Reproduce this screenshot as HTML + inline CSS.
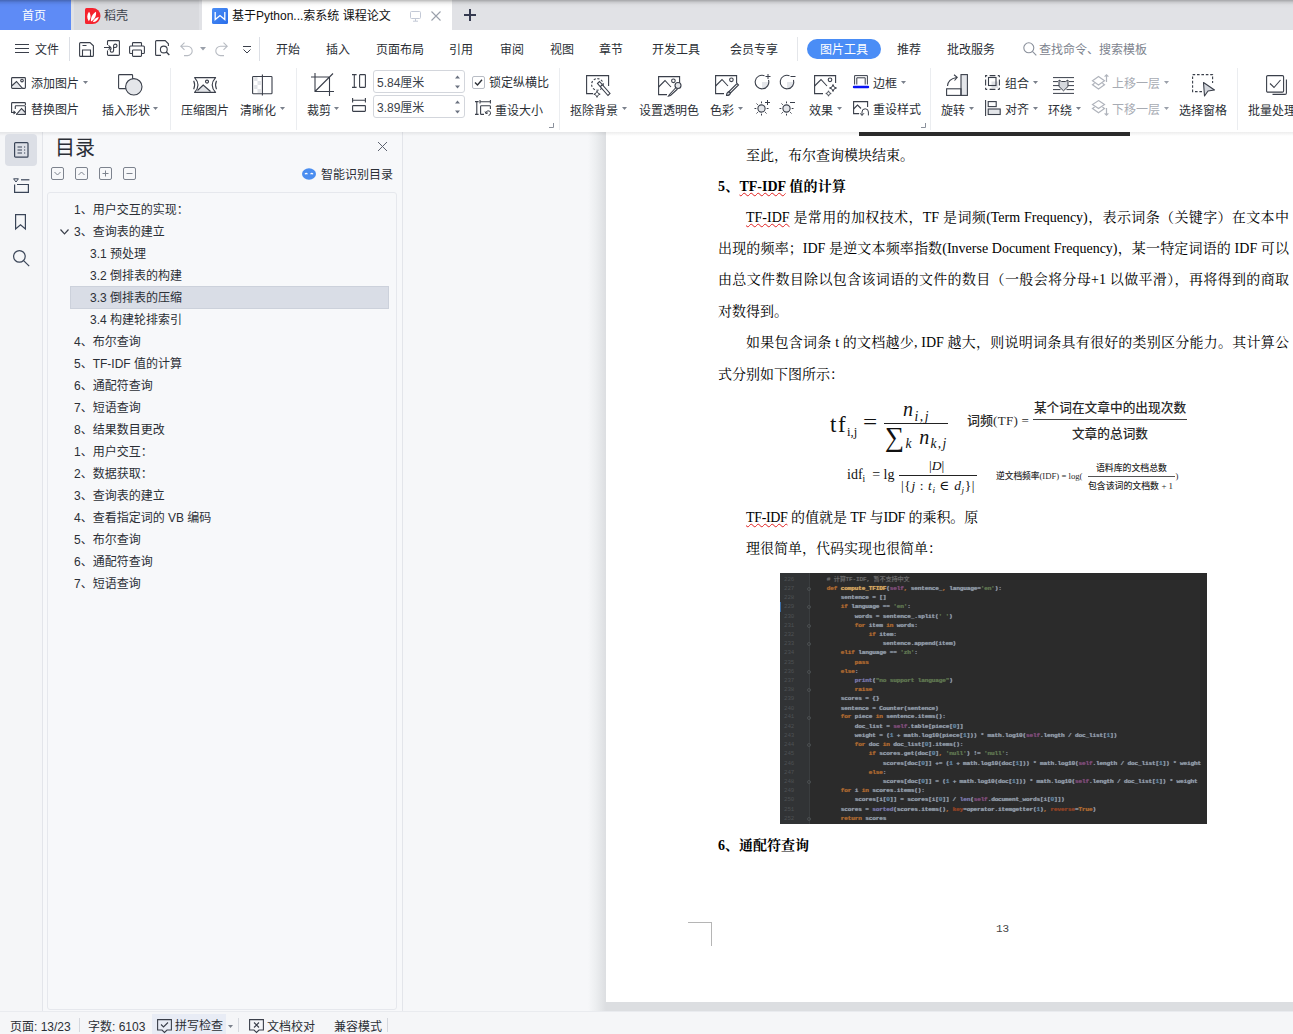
<!DOCTYPE html>
<html lang="zh-CN">
<head>
<meta charset="utf-8">
<title>基于Python的检索系统 课程论文</title>
<style>
*{box-sizing:border-box;margin:0;padding:0}
html,body{width:1293px;height:1034px;overflow:hidden;background:#f5f6f8}
body{position:relative;font-family:"Liberation Sans","Noto Sans CJK SC",sans-serif;font-size:12px;color:#2b2f36}
.abs{position:absolute}
.t{position:absolute;white-space:nowrap;line-height:20px;height:20px}
svg{position:absolute;overflow:visible}
svg *{vector-effect:none}
/* tab bar */
#tabbar{left:0;top:0;width:1293px;height:30px;background:#e1e2e6}
#tabshadow{left:0;top:0;width:1293px;height:8px;background:linear-gradient(rgba(0,0,0,.27),rgba(0,0,0,.1) 30%,rgba(0,0,0,.02) 60%,rgba(0,0,0,0))}
#tab-home{left:0;top:0;width:71px;height:30px;background:#5e8bf6;color:#fff}
#tab-dk{left:74px;top:0;width:125px;height:30px;background:#d9dade}
#tab-doc{left:202px;top:0;width:250px;height:30px;background:#fff}
/* menu */
#menubar{left:0;top:30px;width:1293px;height:35px;background:#fff}
#ribbon{left:0;top:65px;width:1293px;height:67px;background:#fff}
.vsep{position:absolute;width:1px;background:#dcdfe5}
/* left */
#strip{left:0;top:132px;width:42px;height:883px;background:#f5f6f8}
#nav{left:42px;top:132px;width:361px;height:883px;background:#f7f8fa;border-left:1px solid #e3e5ea;border-right:1px solid #e3e5ea}
#navbox{left:47px;top:192px;width:350px;height:818px;background:#f7f8fa;border:1px solid #e6e8ed;border-radius:3px}
#gap{left:403px;top:132px;width:185px;height:883px;background:#f6f7f9}
#status{left:0;top:1011px;width:1293px;height:23px;background:#f5f6f8;border-top:1px solid #e9ebef}
/* page */
#canvas{left:588px;top:132px;width:705px;height:879px;background:linear-gradient(to right,#f6f7f9 0,#eceef0 8px,#dcdee1 18px,#dcdee1 100%)}
#page{left:606px;top:132px;width:700px;height:870px;background:#fff}
.doc{position:absolute;white-space:nowrap;font-family:"Liberation Serif","Noto Serif CJK SC",serif;font-size:14px;line-height:20px;height:20px;color:#000}
.wavy{text-decoration:underline wavy #e02020 1px;text-underline-offset:1px}
.j{text-align:justify;text-align-last:justify;white-space:normal}

.m{position:absolute;white-space:nowrap;font-family:"Liberation Serif","DejaVu Serif",serif;color:#111;line-height:1;transform:translateY(-50%)}
.m i{font-style:italic}
.m sub{font-size:68%;vertical-align:-0.35em;line-height:0}
.mc{position:absolute;white-space:nowrap;font-family:"Liberation Sans","Noto Sans CJK SC",sans-serif;color:#2a2a2a;font-weight:500;line-height:1;transform:translate(-50%,-50%)}
.bar{position:absolute;height:1px;background:#222}

#code{left:780px;top:573px;width:427px;height:251px;background:#2b2b2b;overflow:hidden}
#gut{left:0;top:0;width:30px;height:251px;background:#313335;border-right:1px solid #3a3d3f}
#codein{position:absolute;left:0;top:2px;width:800px;transform:scale(0.58333);transform-origin:0 0;font-family:"Liberation Mono","Noto Sans CJK SC",monospace;font-size:10.6px;letter-spacing:-0.36px;font-weight:bold;white-space:pre;text-shadow:0 0 1.2px currentColor;opacity:.8}
.cl{height:15.765px;line-height:15.765px;position:relative}
.ln{position:absolute;left:7px;color:#55595c;font-weight:normal;font-size:10px;letter-spacing:-0.2px;text-shadow:none}
.cc{position:absolute;left:80px}
</style>
</head>
<body>
<div class="abs" id="tabbar"></div>
<div class="abs" id="tab-home"></div>
<div class="abs" id="tab-dk"></div>
<div class="abs" id="tab-doc"></div>
<div class="abs" id="menubar"></div>
<div class="abs" id="ribbon"></div>
<div class="abs" id="strip"></div>
<div class="abs" id="nav"></div>
<div class="abs" id="navbox"></div>
<div class="abs" id="gap"></div>
<div class="abs" id="canvas"></div>
<div class="abs" id="page"></div>
<div class="abs" id="status"></div>

<div class="t" style="left:22px;top:6px;color:#fff">首页</div>
<svg style="left:85px;top:8px" width="16" height="16" viewBox="0 0 16 16"><path d="M0 1.5Q0 0 1.5 0H7.5A8 8 0 0 1 7.5 16H1.5Q0 16 0 14.5Z" fill="#f5222d"/><path d="M3.800 13.200C1.600 10.300 1.800 6.500 4 3.800C6 6.500 6.200 10.500 3.800 13.200Z M6 13.500C5.500 9.500 7.800 5.500 11 3.800C11.600 7.800 9.600 12 6 13.500Z M7.800 14C9 11 11.500 9.200 13.800 9C13.200 12 10.800 14.200 7.800 14Z" fill="#fff"/></svg>
<div class="t" style="left:104px;top:6px;color:#3a3f4a">稻壳</div>
<svg style="left:212px;top:8px" width="16" height="16" viewBox="0 0 16 16"><defs><linearGradient id="wg" x1="0" y1="0" x2="1" y2="1"><stop offset="0" stop-color="#4b8ef5"/><stop offset="1" stop-color="#2a6eea"/></linearGradient></defs><rect width="16" height="16" rx="1.500" fill="url(#wg)"/><path d="M3.200 4V11.500L8 7.500L12.800 11.500V4" fill="none" stroke="#fff" stroke-width="1.300"/></svg>
<div class="t" style="left:232px;top:6px;color:#111;">基于Python...索系统 课程论文</div>
<svg style="left:410px;top:11px" width="11" height="11" viewBox="0 0 11 11" fill="none" stroke="#c3c9d6" stroke-width="1"><rect x="0.500" y="0.500" width="10" height="7" rx="1"/><path d="M5.500 7.500V10M3 10.200H8"/></svg>
<svg style="left:431px;top:11px" width="10" height="10" viewBox="0 0 10 10" fill="none" stroke="#9aa0ab" stroke-width="1.100"><path d="M0.500 0.500L9.500 9.500M9.500 0.500L0.500 9.500"/></svg>
<svg style="left:464px;top:9px" width="12" height="12" viewBox="0 0 12 12" fill="none" stroke="#353a50" stroke-width="2"><path d="M6 0V12M0 6H12"/></svg>
<div class="abs" id="tabshadow"></div>
<div class="abs" style="left:0;top:132px;width:1293px;height:4px;background:linear-gradient(rgba(0,0,0,.07),rgba(0,0,0,0))"></div>
<!--TABS-->

<svg style="left:15px;top:44px" width="14" height="9" viewBox="0 0 14 9" fill="none" stroke="#3a3f4a" stroke-width="1"><path d="M0 0.500H14M0 4.500H14M0 8.500H14"/></svg>
<div class="t" style="left:35px;top:40px">文件</div>
<div class="vsep" style="left:69px;top:37px;height:24px"></div>
<svg style="left:79px;top:42px" width="15" height="15" viewBox="0 0 15 15" fill="none" stroke="#3a3f4a" stroke-width="1.1"><path d="M0.600 1.600Q0.600 0.600 1.600 0.600H11L14.400 3.800V13.400Q14.400 14.400 13.400 14.400H1.600Q0.600 14.400 0.600 13.400Z"/><path d="M3.500 14.400V8H11.500V14.400M3.500 3.500H7.500"/></svg>
<svg style="left:104px;top:40px" width="16" height="16" viewBox="0 0 16 16" fill="none" stroke="#3a3f4a" stroke-width="1.1"><path d="M3.500 5V1.500Q3.500 0.600 4.500 0.600H14.400Q15.400 0.600 15.400 1.500V14.500Q15.400 15.400 14.400 15.400H4.500Q3.500 15.400 3.500 14.500V10.500"/><path d="M0 7.500H6.500M4.500 5.300L6.800 7.500L4.500 9.700"/><path d="M9 7.500H11.300A1.700 1.700 0 1 0 9.600 5.800V10.500A1.700 1.700 0 1 1 7.900 8.800"/></svg>
<svg style="left:129px;top:42px" width="16" height="15" viewBox="0 0 16 15" fill="none" stroke="#3a3f4a" stroke-width="1.1"><path d="M3.500 4V1.300Q3.500 0.600 4.300 0.600H11.700Q12.500 0.600 12.500 1.300V4"/><path d="M3.500 11.500H1.600Q0.600 11.500 0.600 10.500V5Q0.600 4 1.600 4H14.400Q15.400 4 15.400 5V10.500Q15.400 11.500 14.400 11.500H12.500"/><rect x="3.500" y="8" width="9" height="6.400" rx="0.800"/></svg>
<svg style="left:155px;top:40px" width="15" height="16" viewBox="0 0 15 16" fill="none" stroke="#3a3f4a" stroke-width="1.1"><path d="M13.400 6V3.800L10.200 0.600H1.600Q0.600 0.600 0.600 1.600V14.400Q0.600 15.400 1.600 15.400H6"/><circle cx="8.800" cy="9.500" r="3.400"/><path d="M11.300 12L14.300 15" stroke-width="1.400"/></svg>
<svg style="left:180px;top:42px" width="13" height="15" viewBox="0 0 13 15" fill="none" stroke="#b7bbc2" stroke-width="1.100"><path d="M4.500 0.600L0.800 4.200L4.500 7.800M0.800 4.200H7.500A4.700 4.700 0 0 1 7.500 13.600H4"/></svg>
<svg style="left:200px;top:47px" width="6" height="4" viewBox="0 0 6 4"><path d="M0 0H6L3 3.500Z" fill="#9aa0aa"/></svg>
<svg style="left:215px;top:42px" width="13" height="15" viewBox="0 0 13 15" fill="none" stroke="#b7bbc2" stroke-width="1.100"><path d="M8.500 0.600L12.200 4.200L8.500 7.800M12.200 4.200H5.500A4.700 4.700 0 0 0 5.500 13.600H9"/></svg>
<svg style="left:243px;top:46px" width="8" height="8" viewBox="0 0 8 8" fill="none" stroke="#3a3f4a" stroke-width="1"><path d="M0 0.500H8M0.500 3.500L4 7L7.500 3.500"/></svg>
<div class="vsep" style="left:259px;top:37px;height:24px"></div>
<div class="t" style="left:276px;top:40px">开始</div>
<div class="t" style="left:326px;top:40px">插入</div>
<div class="t" style="left:376px;top:40px">页面布局</div>
<div class="t" style="left:449px;top:40px">引用</div>
<div class="t" style="left:500px;top:40px">审阅</div>
<div class="t" style="left:550px;top:40px">视图</div>
<div class="t" style="left:599px;top:40px">章节</div>
<div class="t" style="left:652px;top:40px">开发工具</div>
<div class="t" style="left:730px;top:40px">会员专享</div>
<div class="vsep" style="left:797px;top:37px;height:24px;background:#e4e6ea"></div>
<div class="abs" style="left:807px;top:39px;width:74px;height:20px;border-radius:10px;background:#4a8df6"></div>
<div class="t" style="left:820px;top:40px;color:#fff">图片工具</div>
<div class="t" style="left:897px;top:40px">推荐</div>
<div class="t" style="left:947px;top:40px">批改服务</div>
<svg style="left:1023px;top:42px" width="14" height="14" viewBox="0 0 14 14" fill="none" stroke="#8a909b" stroke-width="1.100"><circle cx="5.800" cy="5.800" r="5"/><path d="M9.400 9.400L13.300 13.300"/></svg>
<div class="t" style="left:1039px;top:40px;color:#7d838e">查找命令、搜索模板</div>
<!--MENU-->

<svg style="left:11px;top:77px" width="15" height="12" viewBox="0 0 15 12" fill="none" stroke="#3a3f4a" stroke-width="1.1"><rect x="0.600" y="0.600" width="13.800" height="10.800" rx="0.800"/><path d="M0.600 9L5.500 4.500L11.500 11.400" fill="#e4e6ea"/><circle cx="11" cy="3.600" r="1.300"/></svg>
<div class="t" style="left:31px;top:74px">添加图片</div><svg style="left:83px;top:81px" width="5" height="3" viewBox="0 0 5 3"><path d="M0 0H5L2.500 3Z" fill="#7a808b"/></svg>
<svg style="left:11px;top:102px" width="15" height="13" viewBox="0 0 15 13" fill="none" stroke="#3a3f4a" stroke-width="1.1"><path d="M0.600 7V1.400Q0.600 0.600 1.400 0.600H13.600Q14.400 0.600 14.400 1.400V3"/><path d="M5 12.400H14.400V4.500Q14.400 3.800 13.600 3.800H5Q4.300 3.800 4.300 4.500V7"/><path d="M5.500 12.400L10.500 6.500L14.400 10.500" fill="#e4e6ea"/><path d="M0.600 7V10.500H4M2.500 8.800L4.300 10.500L2.500 12.200"/></svg>
<div class="t" style="left:31px;top:100px">替换图片</div>
<svg style="left:118px;top:74px" width="25" height="22" viewBox="0 0 25 22" fill="none" stroke="#3a3f4a" stroke-width="1.1"><rect x="0.600" y="0.600" width="14" height="14" rx="0.800"/><circle cx="15.800" cy="12.800" r="8.200" fill="#e4e6ea"/></svg>
<div class="t" style="left:102px;top:101px">插入形状</div><svg style="left:153px;top:107px" width="5" height="3" viewBox="0 0 5 3"><path d="M0 0H5L2.500 3Z" fill="#7a808b"/></svg>
<div class="vsep" style="left:170px;top:68px;height:62px;background:#ebedf0"></div>
<svg style="left:193px;top:77px" width="24" height="16" viewBox="0 0 24 16" fill="none" stroke="#3a3f4a" stroke-width="1.1"><path d="M3 14.800L10.200 8.100L19 14.800Z" fill="#e2e4e8" stroke="none"/><path d="M1.600 0.600H22.600Q15.800 8 22.600 15.400H1.600Q8.400 8 1.600 0.600Z" stroke-linejoin="round"/><path d="M4.500 13.500L10.200 8.100L17.500 14.500"/><circle cx="14" cy="4.600" r="1.500"/><path d="M0.700 3.800Q2.600 8 0.700 12.200M23.500 3.800Q21.600 8 23.500 12.200"/></svg>
<div class="t" style="left:181px;top:101px">压缩图片</div>
<svg style="left:252px;top:74px" width="21" height="22" viewBox="0 0 21 22" fill="none" stroke="#3a3f4a" stroke-width="1.1"><path d="M2.200 3h3.300v4h-3.300zM5.500 7h3.400v4h-3.400zM2.200 11h3.300v4h-3.300zM5.500 15h3.400v4h-3.400z" fill="#e1e3e7" stroke="none"/><rect x="0.600" y="2.500" width="19.400" height="17.200" rx="0.800"/><path d="M10.400 0.400V21.600"/></svg>
<div class="t" style="left:240px;top:101px">清晰化</div><svg style="left:280px;top:107px" width="5" height="3" viewBox="0 0 5 3"><path d="M0 0H5L2.500 3Z" fill="#7a808b"/></svg>
<div class="vsep" style="left:296px;top:68px;height:62px;background:#ebedf0"></div>
<svg style="left:311px;top:73px" width="23" height="23" viewBox="0 0 23 23" fill="none" stroke="#3a3f4a" stroke-width="1.1"><path d="M4 0V18.500H23M0 4H18.500V23M4 18.500L22 0.500"/></svg>
<div class="t" style="left:307px;top:101px">裁剪</div><svg style="left:334px;top:107px" width="5" height="3" viewBox="0 0 5 3"><path d="M0 0H5L2.500 3Z" fill="#7a808b"/></svg>
<svg style="left:352px;top:74px" width="14" height="14" viewBox="0 0 14 14" fill="none" stroke="#3a3f4a" stroke-width="1.1"><path d="M0 0.600H4.600M0 13.400H4.600M2.300 0.600V13.400"/><rect x="7.600" y="0.600" width="5.800" height="12.800" rx="0.600"/></svg>
<svg style="left:352px;top:98px" width="14" height="14" viewBox="0 0 14 14" fill="none" stroke="#3a3f4a" stroke-width="1.1"><path d="M0.600 0V4.600M13.400 0V4.600M0.600 2.300H13.400"/><rect x="0.600" y="7.600" width="12.800" height="5.800" rx="0.600"/></svg>
<div class="abs" style="left:373px;top:70px;width:92px;height:23px;border:1px solid #d3d6dc;border-radius:3px;background:#fff"></div>
<div class="abs" style="left:373px;top:95px;width:92px;height:23px;border:1px solid #d3d6dc;border-radius:3px;background:#fff"></div>
<div class="t" style="left:377px;top:73px;color:#3a3f4a">5.84厘米</div>
<div class="t" style="left:377px;top:98px;color:#3a3f4a">3.89厘米</div>
<svg style="left:455px;top:75px" width="5" height="14" viewBox="0 0 5 14" fill="#6b7280"><path d="M0 3.500H5L2.500 0.500ZM0 10.500H5L2.500 13.500Z"/></svg>
<svg style="left:455px;top:100px" width="5" height="14" viewBox="0 0 5 14" fill="#6b7280"><path d="M0 3.500H5L2.500 0.500ZM0 10.500H5L2.500 13.500Z"/></svg>
<svg style="left:472px;top:76px" width="13" height="13" viewBox="0 0 13 13" fill="none"><rect x="0.500" y="0.500" width="12" height="12" rx="1.500" stroke="#b9bdc5" fill="#fff"/><path d="M3 6.500L5.500 9L10 3.800" stroke="#2b2f36" stroke-width="1.400"/></svg>
<div class="t" style="left:489px;top:73px">锁定纵横比</div>
<svg style="left:475px;top:100px" width="16" height="16" viewBox="0 0 16 16" fill="none" stroke="#3a3f4a" stroke-width="1.1"><path d="M0 1.600H3.600M0 14.400H3.600M1.800 1.600V14.400"/><path d="M5 0V3.600M15.400 0V3.600M5 1.800H15.400"/><path d="M9 14.400H6.300Q5.600 14.400 5.600 13.700V6.500Q5.600 5.800 6.300 5.800H14.700Q15.400 5.800 15.400 6.500V9"/><path d="M11 13.500A2.300 2.300 0 1 1 13.500 15.400M10 11.500L11 13.700L13 12.800" stroke-width="1"/></svg>
<div class="t" style="left:495px;top:101px">重设大小</div>
<svg style="left:549px;top:123px" width="5" height="5" viewBox="0 0 5 5" fill="none" stroke="#8a909b" stroke-width="1"><path d="M4.500 0V4.500H0"/></svg>
<div class="vsep" style="left:559px;top:68px;height:62px;background:#ebedf0"></div>

<svg style="left:586px;top:75px" width="25" height="22" viewBox="0 0 25 22" fill="none" stroke="#3a3f4a" stroke-width="1.1"><path d="M7 18.600H0.600V0.600H22.600V11"/><circle cx="11.400" cy="9.400" r="5.800" stroke-dasharray="2.200 1.600"/><path d="M11.500 8.500L13.500 6.500L24 18.500L22 20.500ZM14.500 11.500L16.500 9.500" fill="#fff"/><path d="M11 16L12 18.200L14.200 19.200L12 20.200L11 22.400L10 20.200L7.800 19.200L10 18.200Z" stroke-width="0.900"/></svg>
<div class="t" style="left:570px;top:101px">抠除背景</div><svg style="left:622px;top:107px" width="5" height="3" viewBox="0 0 5 3"><path d="M0 0H5L2.500 3Z" fill="#7a808b"/></svg>
<svg style="left:658px;top:76px" width="25" height="21" viewBox="0 0 25 21" fill="none" stroke="#3a3f4a" stroke-width="1.1"><path d="M9 18.600H0.600V0.600H21.600V7"/><path d="M0.600 11L7 4.500L13 11"/><circle cx="15.400" cy="4.800" r="1.800"/><circle cx="20" cy="9.500" r="3" fill="#e4e6ea"/><path d="M18 11.500L11.500 18.500L10.500 20L12.500 19.500L19.500 13"/></svg>
<div class="t" style="left:639px;top:101px">设置透明色</div>
<svg style="left:715px;top:75px" width="25" height="22" viewBox="0 0 25 22" fill="none" stroke="#3a3f4a" stroke-width="1.1"><path d="M9 18.600H0.600V0.600H21.600V8"/><path d="M0.600 11L7 4.500L13 11"/><circle cx="16.400" cy="4.800" r="1.800"/><path d="M22 8.500L23.500 10L15.500 18L14 16.500Z"/><path d="M14 16.500Q11.500 17.500 11.500 20.500Q14.500 20.800 15.500 18Z" fill="#d5d8de"/></svg>
<div class="t" style="left:710px;top:101px">色彩</div><svg style="left:738px;top:107px" width="5" height="3" viewBox="0 0 5 3"><path d="M0 0H5L2.500 3Z" fill="#7a808b"/></svg>
<svg style="left:755px;top:74px" width="16" height="16" viewBox="0 0 16 16" fill="none" stroke="#3a3f4a" stroke-width="1.1"><path d="M7 1.200V14.800A6.800 6.800 0 0 0 13.800 8H7Z" fill="#e4e6ea" stroke="none"/><path d="M9.500 1.700A6.800 6.800 0 1 0 13.500 6"/><path d="M13 0V5M10.500 2.500H15.500" stroke-width="1"/></svg>
<svg style="left:780px;top:74px" width="16" height="16" viewBox="0 0 16 16" fill="none" stroke="#3a3f4a" stroke-width="1.1"><path d="M7 1.200V14.800A6.800 6.800 0 0 0 13.800 8H7Z" fill="#e4e6ea" stroke="none"/><path d="M9.500 1.700A6.800 6.800 0 1 0 13.500 6"/><path d="M10.500 2.500H15.500" stroke-width="1"/></svg>
<svg style="left:754px;top:100px" width="17" height="17" viewBox="0 0 17 17" fill="none" stroke="#3a3f4a" stroke-width="1.1"><circle cx="7.500" cy="8.500" r="3.600" fill="#e4e6ea"/><path d="M7.500 1.500V3.300M7.500 13.700V15.500M0.500 8.500H2.300M12.700 8.500H14.500M2.500 3.500L3.800 4.800M11.200 12.200L12.500 13.500M2.500 13.500L3.800 12.200" stroke-width="1"/><path d="M13.500 0V5M11 2.500H16" stroke-width="1"/></svg>
<svg style="left:779px;top:100px" width="17" height="17" viewBox="0 0 17 17" fill="none" stroke="#3a3f4a" stroke-width="1.1"><circle cx="7.500" cy="8.500" r="3.600" fill="#e4e6ea"/><path d="M7.500 1.500V3.300M7.500 13.700V15.500M0.500 8.500H2.300M12.700 8.500H14.500M2.500 3.500L3.800 4.800M11.200 12.200L12.500 13.500M2.500 13.500L3.800 12.200" stroke-width="1"/><path d="M11 2.500H16" stroke-width="1"/></svg>
<svg style="left:814px;top:75px" width="25" height="22" viewBox="0 0 25 22" fill="none" stroke="#3a3f4a" stroke-width="1.1"><path d="M9 18.600H0.600V0.600H21.600V8"/><path d="M0.600 11L7 4.500L13 11"/><circle cx="16" cy="4.800" r="1.800"/><path d="M19 9.500L20 12L22.500 13L20 14L19 16.500L18 14L15.500 13L18 12Z" stroke-width="1"/><path d="M14.500 15.800L15.300 17.700L17.200 18.500L15.300 19.300L14.500 21.200L13.700 19.300L11.800 18.500L13.700 17.700Z" stroke-width="0.900"/></svg>
<div class="t" style="left:809px;top:101px">效果</div><svg style="left:837px;top:107px" width="5" height="3" viewBox="0 0 5 3"><path d="M0 0H5L2.500 3Z" fill="#7a808b"/></svg>
<svg style="left:854px;top:75px" width="14" height="14" viewBox="0 0 14 14" fill="none" stroke="#3a3f4a" stroke-width="1.1"><path d="M0.600 9.500V0.600H13.400V9.500M2.800 9.500V2.800H11.200V9.500" stroke-width="1"/><path d="M0 12H14" stroke="#0a14f5" stroke-width="2.400" stroke-linecap="round"/></svg>
<div class="t" style="left:873px;top:74px">边框</div><svg style="left:901px;top:81px" width="5" height="3" viewBox="0 0 5 3"><path d="M0 0H5L2.500 3Z" fill="#7a808b"/></svg>
<svg style="left:853px;top:101px" width="16" height="15" viewBox="0 0 16 15" fill="none" stroke="#3a3f4a" stroke-width="1.1"><path d="M6 12.600H0.600V0.600H14.600V6"/><path d="M0.600 8L4.500 4L8 7.500"/><path d="M9 14.400V11A3.200 3.200 0 0 1 15.400 11V14.400M7 12.200L9 14.400L11 12.200" stroke-width="1"/></svg>
<div class="t" style="left:873px;top:100px">重设样式</div>
<svg style="left:921px;top:123px" width="5" height="5" viewBox="0 0 5 5" fill="none" stroke="#8a909b" stroke-width="1"><path d="M4.500 0V4.500H0"/></svg>
<div class="vsep" style="left:930px;top:68px;height:62px;background:#ebedf0"></div>

<svg style="left:946px;top:74px" width="22" height="22" viewBox="0 0 22 22" fill="none" stroke="#3a3f4a" stroke-width="1.1"><rect x="15" y="0.600" width="6.400" height="20.800" fill="#e4e6ea"/><rect x="0.600" y="14.800" width="14.400" height="6.600"/><path d="M1.500 12Q2 5 10.500 3.500M8 0.800L11.200 3.400L8.500 6.500"/></svg>
<div class="t" style="left:941px;top:101px">旋转</div><svg style="left:969px;top:107px" width="5" height="3" viewBox="0 0 5 3"><path d="M0 0H5L2.500 3Z" fill="#7a808b"/></svg>
<svg style="left:985px;top:75px" width="15" height="15" viewBox="0 0 15 15" fill="none" stroke="#3a3f4a" stroke-width="1.1"><rect x="6.500" y="6.500" width="6.500" height="6.500" fill="#dfe1e6" stroke="none"/><rect x="3.500" y="2.500" width="7.500" height="8" stroke-width="1.100"/><path d="M0.600 0.600H14.400V14.400H0.600Z" stroke-dasharray="1.600 2.400 5.800 2.400 1.600 0" stroke-width="1.100"/></svg>
<div class="t" style="left:1005px;top:74px">组合</div><svg style="left:1033px;top:81px" width="5" height="3" viewBox="0 0 5 3"><path d="M0 0H5L2.500 3Z" fill="#7a808b"/></svg>
<svg style="left:985px;top:100px" width="16" height="16" viewBox="0 0 16 16" fill="none" stroke="#3a3f4a" stroke-width="1.1"><path d="M0.600 0V16"/><rect x="3.200" y="1.600" width="8" height="5"/><rect x="3.200" y="9" width="12" height="5.500" fill="#e4e6ea"/></svg>
<div class="t" style="left:1005px;top:100px">对齐</div><svg style="left:1033px;top:107px" width="5" height="3" viewBox="0 0 5 3"><path d="M0 0H5L2.500 3Z" fill="#7a808b"/></svg>
<svg style="left:1053px;top:77px" width="21" height="17" viewBox="0 0 21 17" fill="none" stroke="#3a3f4a" stroke-width="1.1"><path d="M0 0.600H21M0 16.400H21M0 4.600H5M16 4.600H21M0 8.600H6M15 8.600H21M0 12.600H7.500M13.500 12.600H21" stroke-width="1"/><path d="M6 3L8.500 4.500H12.500L15 3V9.500L10.500 13.800L6 9.500Z" fill="#d5d8de" stroke-width="1"/></svg>
<div class="t" style="left:1048px;top:101px">环绕</div><svg style="left:1076px;top:107px" width="5" height="3" viewBox="0 0 5 3"><path d="M0 0H5L2.500 3Z" fill="#7a808b"/></svg>
<svg style="left:1092px;top:74px" width="17" height="16" viewBox="0 0 17 16" fill="none" stroke="#b0b4bc" stroke-width="1.200"><path d="M6.500 2.600L12.500 6.800L6.500 11L0.500 6.800Z"/><path d="M2.600 9.200L0.500 10.700L6.500 14.900L12.500 10.700L10.400 9.200"/><path d="M14.500 8V0.800M12.600 2.700L14.500 0.800L16.400 2.700"/></svg>
<div class="t" style="left:1112px;top:74px;color:#a7abb3">上移一层</div><svg style="left:1164px;top:81px" width="5" height="3" viewBox="0 0 5 3"><path d="M0 0H5L2.500 3Z" fill="#9aa0aa"/></svg>
<svg style="left:1092px;top:100px" width="17" height="16" viewBox="0 0 17 16" fill="none" stroke="#b0b4bc" stroke-width="1.200"><path d="M6.500 0.600L12.500 4.600L6.500 8.600L0.500 4.600Z"/><path d="M2.600 7L0.500 8.500L6.500 12.700L12.500 8.500L10.400 7"/><path d="M14.500 8V15.200M12.600 13.300L14.500 15.200L16.400 13.300"/></svg>
<div class="t" style="left:1112px;top:100px;color:#a7abb3">下移一层</div><svg style="left:1164px;top:107px" width="5" height="3" viewBox="0 0 5 3"><path d="M0 0H5L2.500 3Z" fill="#9aa0aa"/></svg>
<svg style="left:1192px;top:74px" width="24" height="24" viewBox="0 0 24 24" fill="none" stroke="#3a3f4a" stroke-width="1.1"><path d="M10 17.600H0.600V0.600H20.600V9" stroke-dasharray="2.600 1.800"/><path d="M11.500 8.500L22.500 16L16 17L12.500 22Z" fill="#d5d8de" stroke-linejoin="round"/></svg>
<div class="t" style="left:1179px;top:101px">选择窗格</div>
<div class="vsep" style="left:1237px;top:68px;height:62px;background:#ebedf0"></div>
<svg style="left:1266px;top:75px" width="21" height="20" viewBox="0 0 21 20" fill="none" stroke="#3a3f4a" stroke-width="1.1"><rect x="0.600" y="0.600" width="17" height="16.500" rx="1.200"/><path d="M4 8.500L8 12.500L14.500 5"/><path d="M6.500 19.400H19Q20.400 19.400 20.400 18V4.500"/></svg>
<div class="t" style="left:1248px;top:101px">批量处理</div>
<!--RIBBON-->

<div class="abs" style="left:5px;top:134px;width:32px;height:32px;border-radius:4px;background:#dcdfe6"></div>
<svg style="left:14px;top:142px" width="15" height="16" viewBox="0 0 15 16" fill="none" stroke="#3a4558" stroke-width="1.2"><rect x="0.600" y="0.600" width="13.400" height="14.600" rx="1"/><path d="M3.500 5H8M3.500 8H8M3.500 11H8M10 5H11.200M10 8H11.200M10 11H11.200" stroke-width="1"/></svg>
<svg style="left:13px;top:178px" width="17" height="15" viewBox="0 0 17 15" fill="none" stroke="#3a4558" stroke-width="1.2"><path d="M0.600 0.800H5.400L3 4Z" stroke-width="1"/><path d="M8 1.800H16.400"/><path d="M1.600 6.500V14.400H15.400V6.500H4"/></svg>
<svg style="left:15px;top:214px" width="11" height="16" viewBox="0 0 11 16" fill="none" stroke="#3a4558" stroke-width="1.2"><path d="M0.600 0.600H10.400V15L5.500 10.800L0.600 15Z"/></svg>
<svg style="left:13px;top:250px" width="17" height="17" viewBox="0 0 17 17" fill="none" stroke="#3a4558" stroke-width="1.2"><circle cx="6.400" cy="6.400" r="5.800"/><path d="M10.600 10.600L16.200 16.200"/></svg>
<div class="t" style="left:55px;top:136px;font-size:20px;line-height:24px;height:24px">目录</div>
<svg style="left:378px;top:142px" width="9" height="9" viewBox="0 0 9 9" fill="none" stroke="#5d6370" stroke-width="1"><path d="M0 0L9 9M9 0L0 9"/></svg>
<svg style="left:51px;top:167px" width="13" height="13" viewBox="0 0 13 13" fill="none" stroke="#7d838e" stroke-width="1"><rect x="0.500" y="0.500" width="12" height="12" rx="1.500"/><path d="M3.500 5L6.500 8L9.500 5"/></svg>
<svg style="left:75px;top:167px" width="13" height="13" viewBox="0 0 13 13" fill="none" stroke="#7d838e" stroke-width="1"><rect x="0.500" y="0.500" width="12" height="12" rx="1.500"/><path d="M3.500 8L6.500 5L9.500 8"/></svg>
<svg style="left:99px;top:167px" width="13" height="13" viewBox="0 0 13 13" fill="none" stroke="#7d838e" stroke-width="1"><rect x="0.500" y="0.500" width="12" height="12" rx="1.500"/><path d="M3.500 6.500H9.500M6.500 3.500V9.500"/></svg>
<svg style="left:123px;top:167px" width="13" height="13" viewBox="0 0 13 13" fill="none" stroke="#7d838e" stroke-width="1"><rect x="0.500" y="0.500" width="12" height="12" rx="1.500"/><path d="M3.500 6.500H9.500"/></svg>
<svg style="left:302px;top:168px" width="14" height="12" viewBox="0 0 14 12"><ellipse cx="7" cy="6" rx="7" ry="5.800" fill="#4a8df0"/><path d="M3 6.300Q4.200 4.300 5.400 6.300M8.600 6.300Q9.800 4.300 11 6.300" fill="none" stroke="#fff" stroke-width="1.200"/></svg>
<div class="t" style="left:321px;top:165px">智能识别目录</div>
<div class="abs" style="left:70px;top:286px;width:319px;height:23px;background:#d9dde6;border:1px solid #ccd1db"></div>
<svg style="left:60px;top:229px" width="9" height="6" viewBox="0 0 9 6" fill="none" stroke="#3a3f4a" stroke-width="1.200"><path d="M0.500 0.500L4.500 4.800L8.500 0.500"/></svg>
<div class="t" style="left:74px;top:200px">1、用户交互的实现：</div>
<div class="t" style="left:74px;top:222px">3、查询表的建立</div>
<div class="t" style="left:90px;top:244px">3.1 预处理</div>
<div class="t" style="left:90px;top:266px">3.2 倒排表的构建</div>
<div class="t" style="left:90px;top:288px">3.3 倒排表的压缩</div>
<div class="t" style="left:90px;top:310px">3.4 构建轮排索引</div>
<div class="t" style="left:74px;top:332px">4、布尔查询</div>
<div class="t" style="left:74px;top:354px">5、TF-IDF 值的计算</div>
<div class="t" style="left:74px;top:376px">6、通配符查询</div>
<div class="t" style="left:74px;top:398px">7、短语查询</div>
<div class="t" style="left:74px;top:420px">8、结果数目更改</div>
<div class="t" style="left:74px;top:442px">1、用户交互：</div>
<div class="t" style="left:74px;top:464px">2、数据获取：</div>
<div class="t" style="left:74px;top:486px">3、查询表的建立</div>
<div class="t" style="left:74px;top:508px">4、查看指定词的 VB 编码</div>
<div class="t" style="left:74px;top:530px">5、布尔查询</div>
<div class="t" style="left:74px;top:552px">6、通配符查询</div>
<div class="t" style="left:74px;top:574px">7、短语查询</div>

<!--LEFT-->
<div class="abs" style="left:859px;top:132px;width:271px;height:4px;background:#2b2b2b"></div>
<div class="doc j" style="left:746px;top:146px;width:168px;">至此，布尔查询模块结束。</div>
<div class="doc j" style="left:718px;top:177px;width:128px;font-weight:bold;">5、<span class="wavy">TF-IDF</span> 值的计算</div>
<div class="doc j" style="left:746px;top:208px;width:543px;"><span class="wavy">TF-IDF</span> 是常用的加权技术，TF 是词频(Term Frequency)，表示词条（关键字）在文本中</div>
<div class="doc j" style="left:718px;top:239px;width:571px;">出现的频率；IDF 是逆文本频率指数(Inverse Document Frequency)，某一特定词语的 IDF 可以</div>
<div class="doc j" style="left:718px;top:270px;width:571px;">由总文件数目除以包含该词语的文件的数目（一般会将分母+1 以做平滑），再将得到的商取</div>
<div class="doc j" style="left:718px;top:302px;width:70px;">对数得到。</div>
<div class="doc j" style="left:746px;top:333px;width:543px;">如果包含词条 t 的文档越少, IDF 越大，则说明词条具有很好的类别区分能力。其计算公</div>
<div class="doc j" style="left:718px;top:365px;width:126px;">式分别如下图所示：</div>

<div class="m" style="left:830px;top:424px;font-size:23px;letter-spacing:1.5px">tf<sub style="font-size:55%;letter-spacing:0">i,j</sub></div>
<div class="m" style="left:863px;top:422px;font-size:21px;transform:translateY(-50%) scaleX(1.2);transform-origin:left">=</div>
<div class="bar" style="left:884px;top:423px;width:64px"></div>
<div class="m" style="left:903px;top:409px;font-size:20px;letter-spacing:1.5px"><i>n<sub>i,j</sub></i></div>
<div class="m" style="left:885px;top:437px;font-size:20px;letter-spacing:1.3px"><span style="font-size:27px;vertical-align:-2px">&#8721;</span><sub><i>k</i></sub> <i>n<sub>k,j</sub></i></div>
<div class="mc" style="left:982px;top:420px;font-size:13px;transform:translate(0,-50%);left:967px">词频<span style="font-family:'Liberation Serif',serif;font-size:13px;letter-spacing:0.300px">(TF) =</span></div>
<div class="bar" style="left:1033px;top:419px;width:154px;background:#444"></div>
<div class="mc" style="left:1110px;top:408px;font-size:12.700px">某个词在文章中的出现次数</div>
<div class="mc" style="left:1110px;top:434px;font-size:12.700px">文章的总词数</div>
<div class="m" style="left:847px;top:475px;font-size:14px">idf<sub>i</sub> &nbsp;= lg</div>
<div class="bar" style="left:899px;top:475px;width:78px"></div>
<div class="m" style="left:929px;top:466px;font-size:13.500px">|<i>D</i>|</div>
<div class="m" style="left:901px;top:486px;font-size:13.500px;letter-spacing:0.600px">|{<i>j</i> : <i>t<sub>i</sub></i> &#8712; <i>d<sub>j</sub></i>}|</div>
<div class="mc" style="left:996px;top:476px;font-size:8.700px;transform:translate(0,-50%)">逆文档频率<span style="font-family:'Liberation Serif',serif">(IDF) = log(</span></div>
<div class="bar" style="left:1088px;top:476px;width:87px;background:#555"></div>
<div class="mc" style="left:1131.500px;top:468px;font-size:8.900px">语料库的文档总数</div>
<div class="mc" style="left:1130.500px;top:485.500px;font-size:8.900px">包含该词的文档数 <span style="font-family:'Liberation Serif',serif">+ 1</span></div>
<div class="mc" style="left:1177px;top:476px;font-size:8.700px;font-family:'Liberation Serif',serif">)</div>
<!--FORMULA-->
<div class="doc j" style="left:746px;top:508px;width:232px;letter-spacing:-0.35px;"><span class="wavy">TF-IDF</span> 的值就是 TF 与IDF 的乘积。原</div>
<div class="doc j" style="left:746px;top:539px;width:196px;">理很简单，代码实现也很简单：</div>
<div class="abs" id="code"><div class="abs" id="gut"></div><div class="abs" style="left:27px;top:13.8px;width:4px;height:4px;border:1px solid #4a4e50;border-radius:3px"></div><div class="abs" style="left:27px;top:32.2px;width:4px;height:4px;border:1px solid #4a4e50;border-radius:3px"></div><div class="abs" style="left:27px;top:50.6px;width:4px;height:4px;border:1px solid #4a4e50;border-radius:3px"></div><div class="abs" style="left:27px;top:69.0px;width:4px;height:4px;border:1px solid #4a4e50;border-radius:3px"></div><div class="abs" style="left:27px;top:96.6px;width:4px;height:4px;border:1px solid #4a4e50;border-radius:3px"></div><div class="abs" style="left:27px;top:115.0px;width:4px;height:4px;border:1px solid #4a4e50;border-radius:3px"></div><div class="abs" style="left:27px;top:142.5px;width:4px;height:4px;border:1px solid #4a4e50;border-radius:3px"></div><div class="abs" style="left:27px;top:170.1px;width:4px;height:4px;border:1px solid #4a4e50;border-radius:3px"></div><div class="abs" style="left:27px;top:206.9px;width:4px;height:4px;border:1px solid #4a4e50;border-radius:3px"></div><div class="abs" style="left:27px;top:243.7px;width:4px;height:4px;border:1px solid #4a4e50;border-radius:3px"></div><div class="abs" style="left:0;top:28.5px;width:1px;height:10px;background:#3d6fa8"></div><div id="codein"><div class="cl"><span class="ln">226</span><span class="cc"><span style="color:#7d7d7d;font-weight:normal"># 计算TF-IDF, 暂不支持中文</span></span></div><div class="cl"><span class="ln">227</span><span class="cc"><span style="color:#cc7832">def </span><span style="color:#ffc66d">compute_TFIDF</span><span style="color:#a9b7c6">(</span><span style="color:#94558d">self</span><span style="color:#cc7832">, </span><span style="color:#a9b7c6">sentence_</span><span style="color:#cc7832">, </span><span style="color:#a9b7c6">language=</span><span style="color:#6a8759">'en'</span><span style="color:#a9b7c6">):</span></span></div><div class="cl"><span class="ln">228</span><span class="cc">    <span style="color:#a9b7c6">sentence = []</span></span></div><div class="cl"><span class="ln">229</span><span class="cc">    <span style="color:#cc7832">if </span><span style="color:#a9b7c6">language == </span><span style="color:#6a8759">'en'</span><span style="color:#a9b7c6">:</span></span></div><div class="cl"><span class="ln">230</span><span class="cc">        <span style="color:#a9b7c6">words = sentence_.split(</span><span style="color:#6a8759">' '</span><span style="color:#a9b7c6">)</span></span></div><div class="cl"><span class="ln">231</span><span class="cc">        <span style="color:#cc7832">for </span><span style="color:#a9b7c6">item </span><span style="color:#cc7832">in </span><span style="color:#a9b7c6">words:</span></span></div><div class="cl"><span class="ln">232</span><span class="cc">            <span style="color:#cc7832">if </span><span style="color:#a9b7c6">item:</span></span></div><div class="cl"><span class="ln">233</span><span class="cc">                <span style="color:#a9b7c6">sentence.append(item)</span></span></div><div class="cl"><span class="ln">234</span><span class="cc">    <span style="color:#cc7832">elif </span><span style="color:#a9b7c6">language == </span><span style="color:#6a8759">'zh'</span><span style="color:#a9b7c6">:</span></span></div><div class="cl"><span class="ln">235</span><span class="cc">        <span style="color:#cc7832">pass</span></span></div><div class="cl"><span class="ln">236</span><span class="cc">    <span style="color:#cc7832">else</span><span style="color:#a9b7c6">:</span></span></div><div class="cl"><span class="ln">237</span><span class="cc">        <span style="color:#8888c6">print</span><span style="color:#a9b7c6">(</span><span style="color:#6a8759">"no support language"</span><span style="color:#a9b7c6">)</span></span></div><div class="cl"><span class="ln">238</span><span class="cc">        <span style="color:#cc7832">raise</span></span></div><div class="cl"><span class="ln">239</span><span class="cc">    <span style="color:#a9b7c6">scores = {}</span></span></div><div class="cl"><span class="ln">240</span><span class="cc">    <span style="color:#a9b7c6">sentence = Counter(sentence)</span></span></div><div class="cl"><span class="ln">241</span><span class="cc">    <span style="color:#cc7832">for </span><span style="color:#a9b7c6">piece </span><span style="color:#cc7832">in </span><span style="color:#a9b7c6">sentence.items():</span></span></div><div class="cl"><span class="ln">242</span><span class="cc">        <span style="color:#a9b7c6">doc_list = </span><span style="color:#94558d">self</span><span style="color:#a9b7c6">.table[piece[</span><span style="color:#6897bb">0</span><span style="color:#a9b7c6">]]</span></span></div><div class="cl"><span class="ln">243</span><span class="cc">        <span style="color:#a9b7c6">weight = (</span><span style="color:#6897bb">1</span><span style="color:#a9b7c6"> + math.log10(piece[</span><span style="color:#6897bb">1</span><span style="color:#a9b7c6">])) * math.log10(</span><span style="color:#94558d">self</span><span style="color:#a9b7c6">.length / doc_list[</span><span style="color:#6897bb">1</span><span style="color:#a9b7c6">])</span></span></div><div class="cl"><span class="ln">244</span><span class="cc">        <span style="color:#cc7832">for </span><span style="color:#a9b7c6">doc </span><span style="color:#cc7832">in </span><span style="color:#a9b7c6">doc_list[</span><span style="color:#6897bb">0</span><span style="color:#a9b7c6">].items():</span></span></div><div class="cl"><span class="ln">245</span><span class="cc">            <span style="color:#cc7832">if </span><span style="color:#a9b7c6">scores.get(doc[</span><span style="color:#6897bb">0</span><span style="color:#a9b7c6">]</span><span style="color:#cc7832">, </span><span style="color:#6a8759">'null'</span><span style="color:#a9b7c6">) != </span><span style="color:#6a8759">'null'</span><span style="color:#a9b7c6">:</span></span></div><div class="cl"><span class="ln">246</span><span class="cc">                <span style="color:#a9b7c6">scores[doc[</span><span style="color:#6897bb">0</span><span style="color:#a9b7c6">]] += (</span><span style="color:#6897bb">1</span><span style="color:#a9b7c6"> + math.log10(doc[</span><span style="color:#6897bb">1</span><span style="color:#a9b7c6">])) * math.log10(</span><span style="color:#94558d">self</span><span style="color:#a9b7c6">.length / doc_list[</span><span style="color:#6897bb">1</span><span style="color:#a9b7c6">]) * weight</span></span></div><div class="cl"><span class="ln">247</span><span class="cc">            <span style="color:#cc7832">else</span><span style="color:#a9b7c6">:</span></span></div><div class="cl"><span class="ln">248</span><span class="cc">                <span style="color:#a9b7c6">scores[doc[</span><span style="color:#6897bb">0</span><span style="color:#a9b7c6">]] = (</span><span style="color:#6897bb">1</span><span style="color:#a9b7c6"> + math.log10(doc[</span><span style="color:#6897bb">1</span><span style="color:#a9b7c6">])) * math.log10(</span><span style="color:#94558d">self</span><span style="color:#a9b7c6">.length / doc_list[</span><span style="color:#6897bb">1</span><span style="color:#a9b7c6">]) * weight</span></span></div><div class="cl"><span class="ln">249</span><span class="cc">    <span style="color:#cc7832">for </span><span style="color:#a9b7c6">i </span><span style="color:#cc7832">in </span><span style="color:#a9b7c6">scores.items():</span></span></div><div class="cl"><span class="ln">250</span><span class="cc">        <span style="color:#a9b7c6">scores[i[</span><span style="color:#6897bb">0</span><span style="color:#a9b7c6">]] = scores[i[</span><span style="color:#6897bb">0</span><span style="color:#a9b7c6">]] / </span><span style="color:#8888c6">len</span><span style="color:#a9b7c6">(</span><span style="color:#94558d">self</span><span style="color:#a9b7c6">.document_words[i[</span><span style="color:#6897bb">0</span><span style="color:#a9b7c6">]])</span></span></div><div class="cl"><span class="ln">251</span><span class="cc">    <span style="color:#a9b7c6">scores = </span><span style="color:#8888c6">sorted</span><span style="color:#a9b7c6">(scores.items()</span><span style="color:#cc7832">, </span><span style="color:#aa4926">key</span><span style="color:#a9b7c6">=operator.itemgetter(</span><span style="color:#6897bb">1</span><span style="color:#a9b7c6">)</span><span style="color:#cc7832">, </span><span style="color:#aa4926">reverse</span><span style="color:#a9b7c6">=</span><span style="color:#cc7832">True</span><span style="color:#a9b7c6">)</span></span></div><div class="cl"><span class="ln">252</span><span class="cc">    <span style="color:#cc7832">return </span><span style="color:#a9b7c6">scores</span></span></div></div></div>
<!--CODE-->
<div class="doc" style="left:718px;top:836px;font-weight:bold;">6、通配符查询</div>
<div class="abs" style="left:688px;top:922px;width:24px;height:24px;border-top:1px solid #b5b5b5;border-right:1px solid #b5b5b5"></div>
<div class="t" style="left:996px;top:919px;font-size:11px;color:#444;font-family:'Liberation Mono',monospace">13</div>
<!--DOC-->

<div class="t" style="left:10px;top:1017px">页面: 13/23</div>
<div class="vsep" style="left:79px;top:1018px;height:14px;background:#d5d8de"></div>
<div class="t" style="left:88px;top:1017px">字数: 6103</div>
<div class="abs" style="left:152px;top:1014px;width:74px;height:20px;background:#e8ecf5"></div>
<svg style="left:157px;top:1019px" width="15" height="14" viewBox="0 0 15 14" fill="none" stroke="#3a3f4a" stroke-width="1.100"><path d="M0.600 0.600H14.400V11H10L7.500 13.400L5 11H0.600Z"/><path d="M4 5.500L6.500 8L11 3.500"/></svg>
<div class="t" style="left:175px;top:1016px">拼写检查</div>
<svg style="left:228px;top:1025px" width="5" height="3" viewBox="0 0 5 3"><path d="M0 0H5L2.500 3Z" fill="#7a808b"/></svg>
<div class="vsep" style="left:238px;top:1018px;height:14px;background:#d5d8de"></div>
<svg style="left:249px;top:1019px" width="15" height="14" viewBox="0 0 15 14" fill="none" stroke="#3a3f4a" stroke-width="1.100"><path d="M0.600 0.600H14.400V11H10L7.500 13.400L5 11H0.600Z"/><path d="M5 3.500L10 8.500M10 3.500L5 8.500"/></svg>
<div class="t" style="left:267px;top:1017px">文档校对</div>
<div class="t" style="left:334px;top:1017px">兼容模式</div>
<div class="vsep" style="left:387px;top:1018px;height:14px;background:#d5d8de"></div>
<!--STATUS-->
</body>
</html>
